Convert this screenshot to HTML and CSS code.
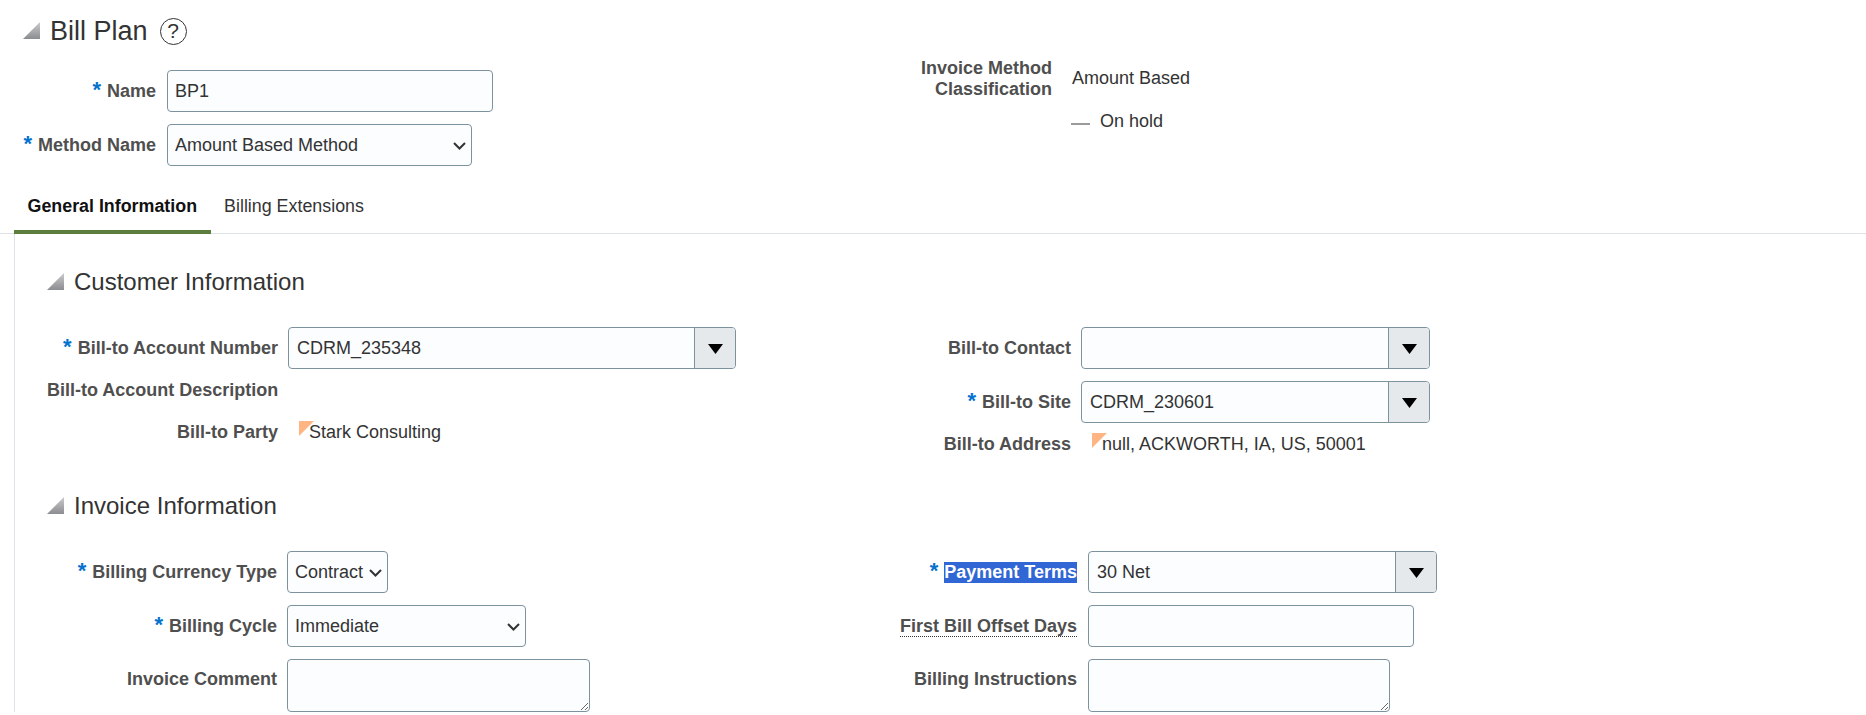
FILE: index.html
```html
<!DOCTYPE html>
<html lang="en">
<head>
<meta charset="utf-8">
<title>Bill Plan</title>
<link rel="stylesheet" href="styles.css">
</head>
<body>
<main class="page">
  <div class="top">
    <div class="top-left">
      <h1 class="title">
        <svg class="tri tri-lg" viewBox="0 0 17 17"><defs><linearGradient id="g1" x1="0" y1="0" x2="0" y2="1"><stop offset="0" stop-color="#c9cbcd"/><stop offset="1" stop-color="#8b8d90"/></linearGradient></defs><polygon points="17,0 17,17 0,17" fill="url(#g1)"/></svg>
        <span>Bill Plan</span>
        <span class="help">?</span>
      </h1>
      <div class="row lab-name">
        <label class="lab"><span class="req">*</span>Name</label>
        <input class="ctl w-name" type="text" value="BP1">
      </div>
      <div class="row lab-name row-gap">
        <label class="lab"><span class="req">*</span>Method Name</label>
        <div class="sel w-method">
          <select class="ctl"><option>Amount Based Method</option></select>
          <svg class="chev" viewBox="0 0 13 8"><path d="M1 1l5.5 5.5L12 1"/></svg>
        </div>
      </div>
    </div>
    <div class="top-right">
      <div class="row lab-class row-tall">
        <div class="lab lab-two">Invoice Method<br>Classification</div>
        <div class="val">Amount Based</div>
      </div>
      <div class="hold"><span class="dash"></span>On hold</div>
    </div>
  </div>

  <nav class="tabs">
    <a class="tab tab-on">General Information</a>
    <a class="tab">Billing Extensions</a>
  </nav>

  <section class="panel">
    <h2 class="sec">
      <svg class="tri" viewBox="0 0 17 17"><polygon points="17,0 17,17 0,17" fill="url(#g1)"/></svg>
      Customer Information
    </h2>
    <div class="cols">
      <div class="lab-a">
        <div class="row">
          <label class="lab"><span class="req">*</span>Bill-to Account Number</label>
          <div class="combo w-acct">
            <input type="text" value="CDRM_235348">
            <span class="drop"><svg viewBox="0 0 15 10"><polygon points="0,0 15,0 7.5,10"/></svg></span>
          </div>
        </div>
        <div class="row"><div class="lab">Bill-to Account Description</div></div>
        <div class="row">
          <div class="lab">Bill-to Party</div>
          <div class="val"><span class="note">Stark Consulting</span></div>
        </div>
      </div>
      <div class="lab-b">
        <div class="row">
          <label class="lab">Bill-to Contact</label>
          <div class="combo w-contact">
            <input type="text" value="">
            <span class="drop"><svg viewBox="0 0 15 10"><polygon points="0,0 15,0 7.5,10"/></svg></span>
          </div>
        </div>
        <div class="row row-gap">
          <label class="lab"><span class="req">*</span>Bill-to Site</label>
          <div class="combo w-contact">
            <input type="text" value="CDRM_230601">
            <span class="drop"><svg viewBox="0 0 15 10"><polygon points="0,0 15,0 7.5,10"/></svg></span>
          </div>
        </div>
        <div class="row">
          <div class="lab">Bill-to Address</div>
          <div class="val"><span class="note">null, ACKWORTH, IA, US, 50001</span></div>
        </div>
      </div>
    </div>

    <h2 class="sec sec-next">
      <svg class="tri" viewBox="0 0 17 17"><polygon points="17,0 17,17 0,17" fill="url(#g1)"/></svg>
      Invoice Information
    </h2>
    <div class="cols">
      <div class="lab-c">
        <div class="row">
          <label class="lab"><span class="req">*</span>Billing Currency Type</label>
          <div class="sel w-contract">
            <select class="ctl"><option>Contract</option></select>
            <svg class="chev" viewBox="0 0 13 8"><path d="M1 1l5.5 5.5L12 1"/></svg>
          </div>
        </div>
        <div class="row row-gap">
          <label class="lab"><span class="req">*</span>Billing Cycle</label>
          <div class="sel w-cycle">
            <select class="ctl"><option>Immediate</option></select>
            <svg class="chev" viewBox="0 0 13 8"><path d="M1 1l5.5 5.5L12 1"/></svg>
          </div>
        </div>
        <div class="row row-gap">
          <label class="lab lab-top">Invoice Comment</label>
          <textarea class="ctl area w-comment"></textarea>
        </div>
      </div>
      <div class="lab-d">
        <div class="row">
          <label class="lab"><span class="req">*</span><span class="picked">Payment Terms</span></label>
          <div class="combo w-terms">
            <input type="text" value="30 Net">
            <span class="drop"><svg viewBox="0 0 15 10"><polygon points="0,0 15,0 7.5,10"/></svg></span>
          </div>
        </div>
        <div class="row row-gap">
          <label class="lab"><span class="dotted">First Bill Offset Days</span></label>
          <input class="ctl w-offset" type="text" value="">
        </div>
        <div class="row row-gap">
          <label class="lab lab-top">Billing Instructions</label>
          <textarea class="ctl area w-instr"></textarea>
        </div>
      </div>
    </div>
  </section>
</main>
</body>
</html>
```

FILE: styles.css
```css
* { box-sizing: border-box; }
html, body { margin: 0; height: 100%; }
body {
  background: #fff;
  color: #333;
  font-family: "Liberation Sans", Arial, sans-serif;
  font-size: 18px;
  overflow: hidden;
}
.page { width: 1866px; }

.top { display: flex; height: 166px; }
.top-left { width: 860px; }
.top-right { padding-top: 57px; }

.title {
  display: flex;
  align-items: center;
  height: 26px;
  margin: 18px 0 26px 23px;
  font-size: 27px;
  font-weight: 400;
}
.tri { width: 17px; height: 17px; flex: none; display: block; }
.tri-lg { margin-right: 10px; margin-top: -1px; }
.help {
  width: 27px;
  height: 27px;
  margin-left: 12px;
  border: 1.5px solid #333;
  border-radius: 50%;
  font-size: 21px;
  line-height: 24px;
  text-align: center;
}

.row {
  display: grid;
  grid-template-columns: var(--lab) auto;
  column-gap: 10px;
  justify-content: start;
  min-height: 42px;
}
.row-gap { margin-top: 12px; }
.row-tall { column-gap: 20px; align-items: center; }
.lab-name { --lab: 156px; column-gap: 11px; }
.lab-class { --lab: 192px; }
.lab-a { --lab: 231px; }
.lab-b { --lab: 211px; }
.lab-c { --lab: 230px; }
.lab-d { --lab: 217px; }
.lab-d .row { column-gap: 11px; }

.lab {
  color: #4f4f4f;
  font-weight: 700;
  line-height: 42px;
  text-align: right;
  white-space: nowrap;
}
.lab-top { line-height: 40px; }
.lab-two { padding-top: 1px; line-height: 21px; }
.req {
  margin-right: 6px;
  color: #0572ce;
  font-size: 22px;
  line-height: 0;
}
.picked {
  padding: 0 0 1px;
  background: #3166d5;
  color: #fff;
}
.dotted { padding-bottom: 0; border-bottom: 1px dotted #333; }

.val { line-height: 42px; white-space: nowrap; }
.row-tall .val { line-height: 21px; }
.note { position: relative; margin-left: 21px; }
.note::before {
  content: "";
  position: absolute;
  left: -10px;
  top: -1px;
  width: 15px;
  height: 15px;
  background: #ffb583;
  clip-path: polygon(0 0, 100% 0, 0 100%);
}

.hold {
  display: flex;
  align-items: center;
  height: 20px;
  margin: 11px 0 0 211px;
}
.dash {
  width: 19px;
  height: 1.5px;
  margin: 6px 10px 0 0;
  background: #9a9a9a;
}

.ctl, .combo {
  height: 42px;
  border: 1px solid #7d929f;
  border-radius: 4px;
  background: #fbfdff;
  color: #333;
  font: inherit;
}
input.ctl, select.ctl { padding: 0 7px; outline: none; }
.sel { position: relative; }
.sel select { width: 100%; appearance: none; }
.chev {
  position: absolute;
  right: 6px;
  top: 18px;
  width: 13px;
  height: 8px;
  fill: none;
  stroke: #333;
  stroke-width: 2;
  pointer-events: none;
}
.combo { display: flex; overflow: hidden; }
.combo input {
  flex: 1;
  min-width: 0;
  border: 0;
  padding: 0 8px;
  background: transparent;
  color: #333;
  font: inherit;
  outline: none;
}
.drop {
  display: flex;
  align-items: center;
  justify-content: center;
  width: 41px;
  flex: none;
  border-left: 1px solid #7d929f;
  background: #e5e9ec;
}
.drop svg { width: 15px; height: 10px; margin-top: 2px; fill: #000; }
.area { height: 53px; display: block; padding: 4px 8px; outline: none; }

.w-name { width: 326px; }
.w-method { width: 305px; }
.w-acct { width: 448px; }
.w-contact { width: 349px; }
.w-contract { width: 101px; }
.w-cycle { width: 239px; }
.w-comment { width: 303px; }
.w-terms { width: 349px; }
.w-offset { width: 326px; }
.w-instr { width: 302px; }

.tabs {
  display: flex;
  height: 68px;
  padding: 24px 0 0 14px;
  border-bottom: 1px solid #dde2e6;
}
.tab {
  height: 44px;
  padding: 0 13.5px;
  border-bottom: 4px solid transparent;
  color: #333;
  font-size: 17.85px;
  line-height: 32px;
  margin-bottom: -1px;
}
.tab-on { border-bottom-color: #5c7d3e; color: #111; font-weight: 700; }

.panel {
  margin-left: 14px;
  padding: 34px 0 0 32px;
  border-left: 1px solid #dde2e6;
}
.sec {
  display: flex;
  align-items: center;
  height: 28px;
  margin: 0 0 31px;
  font-size: 24px;
  font-weight: 400;
  color: #333;
}
.sec .tri { margin-right: 10px; margin-top: -2px; }
.sec-next { margin-top: 27px; }
.cols { display: grid; grid-template-columns: 813px 1fr; }
```
